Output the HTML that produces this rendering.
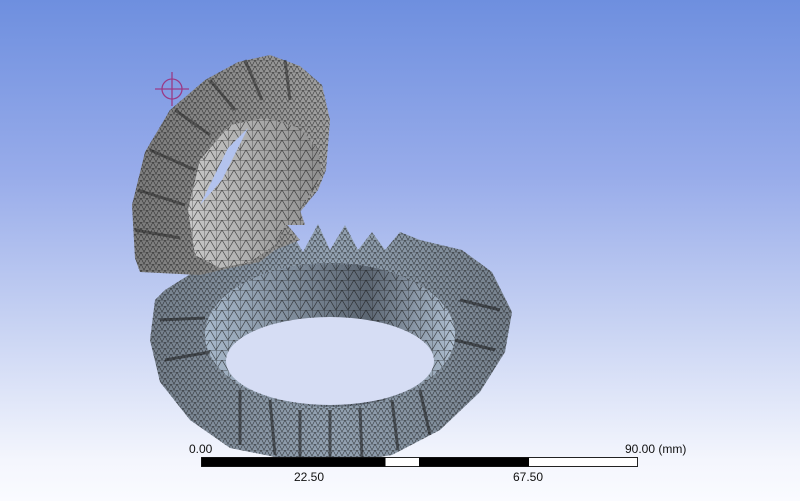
<!DOCTYPE html>
<html><head><meta charset="utf-8"><style>
html,body{margin:0;padding:0;width:800px;height:501px;overflow:hidden}
body{background:linear-gradient(#6e8fdf 0%,#98acea 35%,#c8d3f3 65%,#f4f6fd 92%,#fafbff 100%);font-family:"Liberation Sans",sans-serif;position:relative}
.t{position:absolute;font-size:12px;color:#111}
</style></head><body>
<svg width="800" height="501" style="position:absolute;left:0;top:0">
<defs>
<pattern id="m" width="12" height="10" patternUnits="userSpaceOnUse">
<path d="M0 0H12M0 10L6 0L12 10M0 0V10" stroke="#111" stroke-width="0.7" fill="none" opacity="0.7"/>
</pattern>
<pattern id="mf" width="6" height="6" patternUnits="userSpaceOnUse">
<path d="M0 0H6M0 6L3 0L6 6" stroke="#111" stroke-width="0.6" fill="none" opacity="0.7"/>
</pattern>
<linearGradient id="gb" x1="0" x2="1"><stop offset="0" stop-color="#75808c"/><stop offset="0.5" stop-color="#94a3b3"/><stop offset="1" stop-color="#75808c"/></linearGradient>
<linearGradient id="gi" x1="0" x2="1"><stop offset="0" stop-color="#a8b9cb"/><stop offset="0.65" stop-color="#5c6672"/><stop offset="1" stop-color="#b0c0d2"/></linearGradient>
<linearGradient id="gt" x1="0" x2="1"><stop offset="0" stop-color="#7a7a7a"/><stop offset="1" stop-color="#a0a0a0"/></linearGradient>
<linearGradient id="gf" x1="0" x2="1"><stop offset="0" stop-color="#c8c8c8"/><stop offset="1" stop-color="#8f8f8f"/></linearGradient>
</defs>
<g>
<path d="M155 300L150 340L160 382L190 420L230 448L290 460L340 463L392 455L440 430L480 392L505 352L512 312L492 272L462 250L420 240L400 232L385 250L372 232L358 250L345 225L330 250L318 224L303 252L290 230L275 245L240 252L200 268L165 290Z" fill="url(#gb)"/>
<path d="M155 300L150 340L160 382L190 420L230 448L290 460L340 463L392 455L440 430L480 392L505 352L512 312L492 272L462 250L420 240L400 232L385 250L372 232L358 250L345 225L330 250L318 224L303 252L290 230L275 245L240 252L200 268L165 290Z" fill="url(#mf)"/>
<ellipse cx="330" cy="335" rx="125" ry="72" fill="url(#gi)"/>
<ellipse cx="330" cy="335" rx="125" ry="72" fill="url(#m)"/>
<ellipse cx="330" cy="361" rx="104" ry="44" fill="#d6ddf4"/>
<g stroke="#1a1a1a" stroke-width="3" opacity="0.55">
<path d="M270 400L275 455M300 410L300 460M330 410L330 462M360 408L362 458M392 400L398 450M240 390L240 445M420 390L430 435M460 300L500 310M455 340L495 350M160 320L205 318M165 360L210 352"/>
</g>
</g>
<g>
<path d="M135 258L132 205L145 152L170 110L205 80L238 62L270 55L300 66L322 85L330 120L326 170L318 190L300 212L285 222L300 240L275 250L260 262L230 268L200 275L140 272Z" fill="url(#gt)"/>
<path d="M135 258L132 205L145 152L170 110L205 80L238 62L270 55L300 66L322 85L330 120L326 170L318 190L300 212L285 222L300 240L275 250L260 262L230 268L200 275L140 272Z" fill="url(#mf)"/>
<g stroke="#222" stroke-width="3" opacity="0.5"><path d="M135 230L180 238M138 190L185 205M150 150L195 170M175 110L210 135M210 80L235 110M245 60L262 100M285 60L290 100"/></g>
<path d="M195 255L188 210L200 160L230 125L265 118L300 128L318 150L322 175L300 210L305 225L285 225L275 245L250 262L220 268Z" fill="url(#gf)"/>
<path d="M195 255L188 210L200 160L230 125L265 118L300 128L318 150L322 175L300 210L305 225L285 225L275 245L250 262L220 268Z" fill="url(#m)"/>
<path d="M200 205L228 148L248 128L222 180Z" fill="#b3c3ee"/>
</g>
<g stroke="#9a3a86" stroke-width="1.3" fill="none"><circle cx="172" cy="89" r="10"/><path d="M155 89H189M172 72V106"/></g>
<rect x="201.5" y="457.5" width="436" height="9" fill="#fff" stroke="#222"/>
<rect x="201.5" y="457.5" width="184" height="9" fill="#000"/>
<rect x="419" y="457.5" width="110" height="9" fill="#000"/>
</svg>
<div class="t" style="left:189px;top:442px">0.00</div>
<div class="t" style="left:625px;top:442px">90.00 (mm)</div>
<div class="t" style="left:294px;top:470px">22.50</div>
<div class="t" style="left:513px;top:470px">67.50</div>
</body></html>
